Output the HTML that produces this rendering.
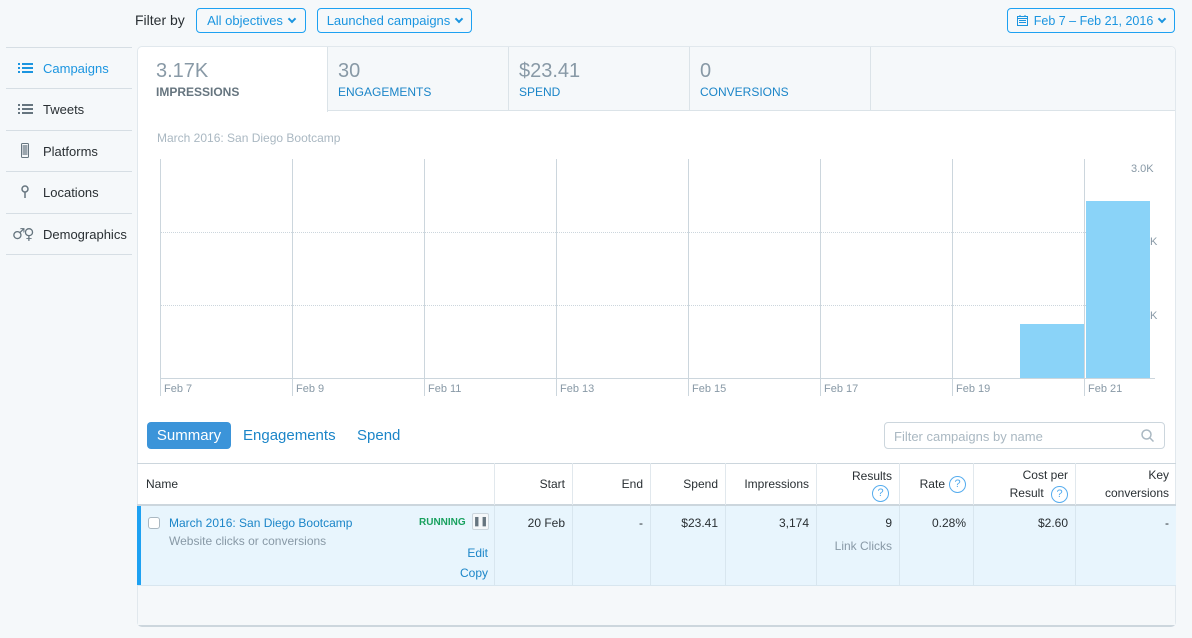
<!DOCTYPE html><html><head><style>
*{box-sizing:border-box;margin:0;padding:0}
body{width:1192px;height:638px;background:#f5f8fa;font-family:"Liberation Sans",sans-serif;position:relative;overflow:hidden;color:#292f33}
.a{position:absolute}
.btn{position:absolute;border:1px solid #1da1f2;border-radius:4px;color:#1b95e0;font-size:13px;display:flex;align-items:center;justify-content:center;gap:6px;background:#fff0}
.chev{display:inline-block;width:6px;height:6px;border-right:2px solid #1b95e0;border-bottom:2px solid #1b95e0;transform:rotate(45deg);margin-top:-4px}
.side{position:absolute;left:6px;width:126px;height:41px;border-top:1px solid #d6dee4;font-size:13px;display:flex;align-items:center;padding-left:37px}
.tab{position:absolute;top:47px;height:64px;border-right:1px solid #dbe3e8;padding:13px 0 0 10px}
.tab b{display:block;font-weight:normal;font-size:20px;color:#8899a6}
.tab span{font-size:12px;color:#1b85c8}
.vl{position:absolute;top:159px;width:1px;height:237px;background:#ccd6dd}
.xl{position:absolute;top:383px;font-size:11px;color:#8899a6}
.hl{position:absolute;left:160px;width:990px;border-top:1px dotted #ccd6dd}
.th{position:absolute;top:463px;height:42px;border-right:1px solid #e1e8ed;font-size:12px;text-align:right;padding-right:7px;display:flex;align-items:center;justify-content:flex-end;line-height:18px}
.td{position:absolute;top:506px;height:79px;border-right:1px solid #d8e6ef;font-size:12px;text-align:right;padding:10px 7px 0 0}
.q{display:inline-block;width:17px;height:17px;border:1px solid #55acee;border-radius:50%;color:#55acee;font-size:11px;text-align:center;line-height:15px;margin-left:4px}
</style></head><body>
<div class="a" style="left:135px;top:12px;font-size:14px">Filter by</div>
<div class="btn" style="left:196px;top:8px;width:110px;height:25px">All objectives <i class="chev"></i></div>
<div class="btn" style="left:317px;top:8px;width:155px;height:25px">Launched campaigns <i class="chev"></i></div>
<div class="btn" style="left:1007px;top:8px;width:168px;height:25px;font-size:12.5px"><svg width="11" height="11" viewBox="0 0 11 11"><rect x="0.5" y="1.5" width="10" height="9" fill="none" stroke="#1b95e0"/><path d="M0 3.5H11M2 5.5h7M2 7.5h7M3 0v2M8 0v2" stroke="#1b95e0"/></svg>Feb 7 – Feb 21, 2016 <i class="chev"></i></div>

<div class="side" style="top:47px;color:#1b95e0"><svg class="a" style="left:12px;top:15px" width="15" height="11"><path d="M0 1h2M4 1h11M0 5h2M4 5h11M0 9h2M4 9h11" stroke="#1b95e0" stroke-width="2"/></svg>Campaigns</div>
<div class="side" style="top:88px"><svg class="a" style="left:12px;top:15px" width="15" height="11"><path d="M0 1h2M4 1h11M0 5h2M4 5h11M0 9h2M4 9h11" stroke="#66757f" stroke-width="2"/></svg>Tweets</div>
<div class="side" style="top:130px"><svg class="a" style="left:15px;top:12px" width="8" height="15"><rect x="0.5" y="0.5" width="7" height="14" rx="1" fill="none" stroke="#66757f"/><rect x="1.5" y="2" width="5" height="10" fill="#9aa5ad"/></svg>Platforms</div>
<div class="side" style="top:171px"><svg class="a" style="left:15px;top:13px" width="8" height="13"><circle cx="4" cy="4" r="3" fill="none" stroke="#66757f" stroke-width="1.5"/><path d="M4 7v6" stroke="#66757f" stroke-width="1.5"/></svg>Locations</div>
<div class="side" style="top:213px;border-bottom:1px solid #d6dee4;height:42px"><span class="a" style="left:6px;top:11px;color:#66757f;font-size:15px;font-family:'DejaVu Sans',sans-serif;letter-spacing:-2px">♂♀</span>Demographics</div>

<div class="a" style="left:137px;top:46px;width:1039px;height:581px;background:#fff;border:1px solid #e1e8ed;border-radius:5px;border-bottom:2px solid #ccd6dd"></div>
<div class="a" style="left:138px;top:47px;width:1037px;height:64px;background:#f5f8fa;border-bottom:1px solid #dbe3e8;border-radius:5px 5px 0 0"></div>
<div class="tab" style="left:138px;width:190px;background:#fff;height:65px;padding-left:18px;border-radius:5px 0 0 0"><b>3.17K</b><span style="color:#66757f;font-weight:bold">IMPRESSIONS</span></div>
<div class="tab" style="left:328px;width:181px"><b>30</b><span>ENGAGEMENTS</span></div>
<div class="tab" style="left:509px;width:181px"><b>$23.41</b><span>SPEND</span></div>
<div class="tab" style="left:690px;width:181px"><b>0</b><span>CONVERSIONS</span></div>

<div class="a" style="left:157px;top:131px;font-size:12px;color:#aab8c2">March 2016: San Diego Bootcamp</div>
<div class="hl" style="top:232px"></div><div class="hl" style="top:305px"></div>
<div class="a" style="left:1020px;top:324px;width:64px;height:54px;background:#8ad3f8"></div>
<div class="a" style="left:1086px;top:201px;width:64px;height:177px;background:#8ad3f8"></div>
<div class="a" style="left:160px;top:378px;width:995px;height:1px;background:#ccd6dd"></div>
<div class="vl" style="left:160px"></div><div class="vl" style="left:292px"></div><div class="vl" style="left:424px"></div><div class="vl" style="left:556px"></div><div class="vl" style="left:688px"></div><div class="vl" style="left:820px"></div><div class="vl" style="left:952px"></div><div class="vl" style="left:1084px"></div>
<div class="xl" style="left:164px">Feb 7</div><div class="xl" style="left:296px">Feb 9</div><div class="xl" style="left:428px">Feb 11</div><div class="xl" style="left:560px">Feb 13</div><div class="xl" style="left:692px">Feb 15</div><div class="xl" style="left:824px">Feb 17</div><div class="xl" style="left:956px">Feb 19</div><div class="xl" style="left:1088px">Feb 21</div>
<div class="a" style="left:1131px;top:163px;font-size:11px;color:#8899a6">3.0K</div>
<div class="a" style="left:1150px;top:236px;font-size:11px;color:#8899a6">K</div>
<div class="a" style="left:1150px;top:310px;font-size:11px;color:#8899a6">K</div>

<div class="a" style="left:147px;top:422px;width:84px;height:27px;background:#3b94d9;border-radius:4px;color:#fff;font-size:15px;text-align:center;line-height:27px">Summary</div>
<div class="a" style="left:243px;top:427px;font-size:15px;color:#1b85c8">Engagements</div>
<div class="a" style="left:357px;top:427px;font-size:15px;color:#1b85c8">Spend</div>
<div class="a" style="left:884px;top:422px;width:281px;height:27px;border:1px solid #ccd6dd;border-radius:4px;font-size:13px;color:#aab8c2;padding:6px 9px">Filter campaigns by name<svg class="a" style="right:10px;top:6px" width="13" height="13"><circle cx="5.5" cy="5.5" r="4.5" fill="none" stroke="#aab8c2" stroke-width="1.5"/><path d="M9 9l3.5 3.5" stroke="#aab8c2" stroke-width="1.5"/></svg></div>

<div class="a" style="left:137px;top:463px;width:1039px;height:1px;background:#ccd6dd"></div>
<div class="a" style="left:137px;top:504px;width:1039px;height:2px;background:#ccd6dd"></div>
<div class="a" style="left:137px;top:506px;width:1039px;height:79px;background:#e8f5fd"></div>
<div class="a" style="left:137px;top:506px;width:4px;height:79px;background:#1da1f2"></div>
<div class="a" style="left:137px;top:585px;width:1039px;height:1px;background:#d8e6ef"></div>
<div class="a" style="left:138px;top:586px;width:1037px;height:39px;background:#f5f8fa"></div>
<div class="th" style="left:137px;width:358px;justify-content:flex-start;padding-left:9px">Name</div>
<div class="th" style="left:495px;width:78px">Start</div>
<div class="th" style="left:573px;width:78px">End</div>
<div class="th" style="left:651px;width:75px">Spend</div>
<div class="th" style="left:726px;width:91px">Impressions</div>
<div class="th" style="left:817px;width:83px;flex-direction:column;align-items:flex-end;justify-content:center">Results<span class="q" style="margin-right:3px">?</span></div>
<div class="th" style="left:900px;width:74px">Rate <span class="q">?</span></div>
<div class="th" style="left:974px;width:102px;flex-direction:column;align-items:flex-end;justify-content:center"><span>Cost per</span><span>Result <span class="q">?</span></span></div>
<div class="th" style="left:1076px;width:100px;flex-direction:column;align-items:flex-end;justify-content:center;border:0"><span>Key</span><span>conversions</span></div>

<div class="td" style="left:137px;width:358px;text-align:left;padding-left:11px">
<span class="a" style="left:11px;top:11px;width:12px;height:12px;border:1px solid #aab8c2;border-radius:3px;background:#fff"></span>
<div style="margin-left:21px;color:#1b85c8">March 2016: San Diego Bootcamp</div>
<div style="margin-left:21px;color:#8899a6;margin-top:4px">Website clicks or conversions</div>
<span class="a" style="left:282px;top:11px;font-size:10px;font-weight:bold;color:#19a15f">RUNNING</span>
<span class="a" style="left:335px;top:7px;width:17px;height:17px;border:1px solid #ccd6dd;border-radius:2px;background:#f5f8fa;font-size:9px;color:#66757f;text-align:center;line-height:15px;font-weight:bold">❚❚</span>
<span class="a" style="right:6px;top:40px;color:#1b85c8">Edit</span>
<span class="a" style="right:6px;top:60px;color:#1b85c8">Copy</span></div>
<div class="td" style="left:495px;width:78px">20 Feb</div>
<div class="td" style="left:573px;width:78px">-</div>
<div class="td" style="left:651px;width:75px">$23.41</div>
<div class="td" style="left:726px;width:91px">3,174</div>
<div class="td" style="left:817px;width:83px">9<div style="color:#8899a6;margin-top:9px">Link Clicks</div></div>
<div class="td" style="left:900px;width:74px">0.28%</div>
<div class="td" style="left:974px;width:102px">$2.60</div>
<div class="td" style="left:1076px;width:100px;border:0">-</div>
</body></html>
